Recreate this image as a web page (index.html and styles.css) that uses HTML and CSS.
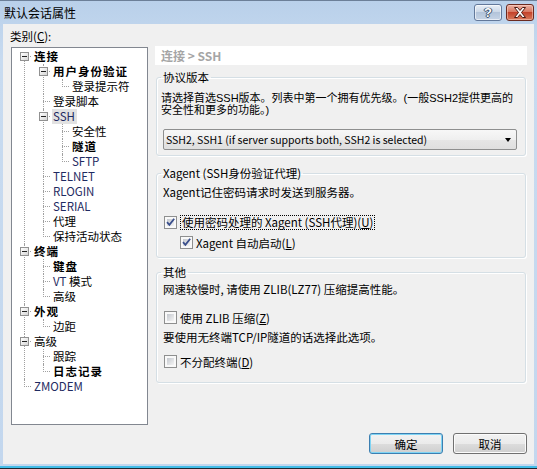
FILE: index.html
```html
<!DOCTYPE html>
<html lang="zh-CN">
<head>
    <meta charset="UTF-8">
    <title>默认会话属性</title>
    <link rel="stylesheet" href="styles.css">
</head>
<body>
    <div class="window">
        <div class="titlebar">
            <span class="title">默认会话属性</span>
            <div class="caption-buttons">
                <span class="cap-btn help">?</span>
                <span class="cap-btn close">
                    <svg width="14" height="11" viewBox="0 0 14 11">
                        <path d="M1.5 0.5h3l2.5 3 2.5-3h3l-4 5 4 5h-3l-2.5-3-2.5 3h-3l4-5z" fill="#fff" stroke="#4a1a12" stroke-width="1" stroke-linejoin="round"/>
                    </svg>
                </span>
            </div>
        </div>

        <div class="client">
            <div class="main">
                <div class="category">
                    <div class="category-label">类别(<u>C</u>):</div>
                    <div class="tree-box">
                        <ul class="tree">
                            <li><span class="exp"></span><span class="node b">连接</span>
                                <ul>
                                    <li><span class="exp"></span><span class="node b">用户身份验证</span>
                                        <ul>
                                            <li><span class="node">登录提示符</span></li>
                                        </ul>
                                    </li>
                                    <li><span class="node">登录脚本</span></li>
                                    <li><span class="exp"></span><span class="node en sel">SSH</span>
                                        <ul>
                                            <li><span class="node">安全性</span></li>
                                            <li><span class="node b">隧道</span></li>
                                            <li><span class="node en">SFTP</span></li>
                                        </ul>
                                    </li>
                                    <li><span class="node en">TELNET</span></li>
                                    <li><span class="node en">RLOGIN</span></li>
                                    <li><span class="node en">SERIAL</span></li>
                                    <li><span class="node">代理</span></li>
                                    <li><span class="node">保持活动状态</span></li>
                                </ul>
                            </li>
                            <li><span class="exp"></span><span class="node b">终端</span>
                                <ul>
                                    <li><span class="node b">键盘</span></li>
                                    <li><span class="node"><span class="en">VT</span> 模式</span></li>
                                    <li><span class="node">高级</span></li>
                                </ul>
                            </li>
                            <li><span class="exp"></span><span class="node b">外观</span>
                                <ul>
                                    <li><span class="node">边距</span></li>
                                </ul>
                            </li>
                            <li><span class="exp"></span><span class="node">高级</span>
                                <ul>
                                    <li><span class="node">跟踪</span></li>
                                    <li><span class="node b">日志记录</span></li>
                                </ul>
                            </li>
                            <li><span class="node en">ZMODEM</span></li>
                        </ul>
                    </div>
                </div>

                <div class="panel">
                    <div class="panel-title">连接 &gt; SSH</div>

                    <fieldset class="group group-proto">
                        <legend>协议版本</legend>
                        <p class="desc">请选择首选SSH版本。列表中第一个拥有优先级。(一般SSH2提供更高的<br>安全性和更多的功能。)</p>
                        <div class="select">
                            <span>SSH2, SSH1 (if server supports both, SSH2 is selected)</span>
                            <i class="arrow"></i>
                        </div>
                    </fieldset>

                    <fieldset class="group group-xagent">
                        <legend>Xagent (SSH身份验证代理)</legend>
                        <p class="line">Xagent记住密码请求时发送到服务器。</p>
                        <label class="check row-use">
                            <span class="box"><svg viewBox="0 0 13 13"><path d="M3 6.2l2.4 2.6 4.8-6" fill="none" stroke="#3a4f8c" stroke-width="1.8"/></svg></span>
                            <span class="focus">使用密码处理的 Xagent (SSH代理)(<u>U</u>)</span>
                        </label>
                        <label class="check row-auto">
                            <span class="box"><svg viewBox="0 0 13 13"><path d="M3 6.2l2.4 2.6 4.8-6" fill="none" stroke="#3a4f8c" stroke-width="1.8"/></svg></span>
                            <span>Xagent 自动启动(<u>L</u>)</span>
                        </label>
                    </fieldset>

                    <fieldset class="group group-other">
                        <legend>其他</legend>
                        <p class="line first">网速较慢时, 请使用 ZLIB(LZ77) 压缩提高性能。</p>
                        <label class="check row-zlib">
                            <span class="box"></span>
                            <span>使用 ZLIB 压缩(<u>Z</u>)</span>
                        </label>
                        <p class="line second">要使用无终端TCP/IP隧道的话选择此选项。</p>
                        <label class="check row-noterm">
                            <span class="box"></span>
                            <span>不分配终端(<u>D</u>)</span>
                        </label>
                    </fieldset>
                </div>
            </div>

            <div class="footer">
                <button class="btn default">确定</button>
                <button class="btn">取消</button>
            </div>
        </div>
    </div>
</body>
</html>
```

FILE: styles.css
```css
* {
    box-sizing: border-box;
}

body {
    margin: 0;
    font-family: "Noto Sans CJK SC", "Noto Sans", sans-serif;
    font-size: 11.5px;
    color: #000;
    background: #fff;
}

u {
    text-decoration: underline;
}

/* window frame */
.window {
    width: 537px;
    height: 469px;
    display: flex;
    flex-direction: column;
    background: linear-gradient(#b9d0ea, #c8dbf0 60px, #c3d7ee);
    border-top: 1px solid #6c7f98;
    box-shadow: inset 0 -1px 0 #1f2a33, inset 0 -3px 0 #43bde8;
}

.titlebar {
    height: 23px;
    display: flex;
    align-items: flex-start;
    justify-content: space-between;
    padding-left: 4px;
}

.title {
    line-height: 23px;
    font-size: 12px;
}

.caption-buttons {
    display: flex;
    gap: 4px;
    margin: 3px 3px 0 0;
}

.cap-btn {
    width: 28px;
    height: 17px;
    border-radius: 3px;
    display: flex;
    align-items: center;
    justify-content: center;
}

.help {
    border: 1px solid #62789a;
    background: linear-gradient(#e9eff7, #c9d6e6 50%, #b3c4da 50%, #c6d4e6);
    box-shadow: inset 0 0 0 1px rgba(255, 255, 255, 0.6);
    color: #fff;
    font-family: "Liberation Sans", sans-serif;
    font-weight: bold;
    font-size: 13px;
    text-shadow: 0 0 1px #2d3e58, 0 0 1px #2d3e58, 1px 0 0 #4d6180, -1px 0 0 #4d6180, 0 1px 0 #4d6180;
}

.close {
    border: 1px solid #6b2a20;
    background: linear-gradient(#eab0a2, #d6735c 50%, #c4432b 50%, #d77a5c);
    box-shadow: inset 0 0 0 1px rgba(255, 220, 210, 0.5);
}

/* client area */
.client {
    flex: 1;
    margin: 0 3px 5px;
    background: #f0f0f0;
    display: flex;
    flex-direction: column;
    padding: 5px 7px 10px 8px;
}

.main {
    display: flex;
}

.category {
    width: 137px;
}

.category-label {
    line-height: 15px;
    margin: 0 0 3px -1px;
}

.tree-box {
    height: 378px;
    border: 1px solid #828790;
    background: #fff;
}

/* tree */
.tree,
.tree ul {
    list-style: none;
    margin: 0;
    padding: 0;
}

.tree {
    padding: 1px 0 0 12px;
}

.tree ul {
    padding-left: 10px;
}

.tree li {
    position: relative;
    padding-left: 9px;
    line-height: 15px;
}

.tree li::before {
    content: "";
    position: absolute;
    left: 0;
    top: 7px;
    width: 7px;
    border-top: 1px dotted #a0a0a0;
}

.tree li::after {
    content: "";
    position: absolute;
    left: 0;
    top: 0;
    bottom: 0;
    border-left: 1px dotted #a0a0a0;
}

.tree li:last-child::after {
    bottom: auto;
    height: 8px;
}

.tree > li:first-child::after {
    top: 7px;
}

.exp {
    position: absolute;
    left: -4px;
    top: 3px;
    width: 9px;
    height: 9px;
    border: 1px solid #919191;
    background: linear-gradient(135deg, #fff, #d6d6d6);
    z-index: 1;
}

.exp::after {
    content: "";
    position: absolute;
    left: 1px;
    top: 3px;
    width: 5px;
    height: 1px;
    background: #222;
}

.node {
    display: inline-block;
    height: 15px;
    padding: 0 1px;
    white-space: nowrap;
}

.node.b {
    font-weight: bold;
    letter-spacing: 1px;
}

.en {
    color: #1f2b62;
}

.node.sel {
    background: #e2e2e2;
    padding: 0 2px 0 1px;
}

/* right panel */
.panel {
    width: 372px;
    margin-left: 7px;
    padding-top: 17px;
}

.panel-title {
    height: 19px;
    line-height: 19px;
    background: #fff;
    padding-left: 6px;
    color: #a5a5a5;
    font-weight: bold;
    font-size: 12px;
}

.group {
    margin: 0 1px;
    padding: 0 8px 0 6px;
    border: 1px solid #d5dfe5;
    border-radius: 3px;
    box-shadow: 1px 1px 0 #fff, inset 1px 1px 0 #fff;
    min-width: 0;
}

.group legend {
    padding: 0 2px;
    margin-left: -2px;
    line-height: 15px;
}

.group p {
    margin: 0;
    line-height: 15px;
}

.group-proto {
    margin-top: 5px;
    padding-bottom: 5px;
}

.group-proto .desc {
    margin: 7px 0 0 -2px;
    font-family: "Liberation Sans", "Noto Sans CJK SC", sans-serif;
    font-size: 11px;
    line-height: 12px;
    white-space: nowrap;
}

.select {
    margin-top: 13px;
    height: 21px;
    border: 1px solid #8e8f8f;
    border-radius: 2px;
    background: linear-gradient(#f7f7f7, #efefef 50%, #e6e6e6 50%, #dfdfdf);
    display: flex;
    align-items: center;
    padding-left: 2px;
    font-size: 10.5px;
    white-space: nowrap;
}

.arrow {
    margin-left: auto;
    margin-right: 5px;
    width: 0;
    height: 0;
    border-left: 3.5px solid transparent;
    border-right: 3.5px solid transparent;
    border-top: 4px solid #000;
}

.group-xagent {
    margin-top: 10px;
    padding-bottom: 7px;
}

.group-xagent .line {
    margin-top: 4px;
}

.group-other {
    margin-top: 7px;
    padding-bottom: 13px;
}

.group-other .first {
    margin-top: 2px;
}

.group-other .second {
    margin-top: 5px;
}

/* checkboxes */
.check {
    display: flex;
    align-items: center;
    height: 15px;
    gap: 2px;
    white-space: nowrap;
}

.box {
    position: relative;
    width: 13px;
    height: 13px;
    flex: none;
    border: 1px solid #8e8f8f;
    padding: 2px;
    background: linear-gradient(135deg, #c4c8ce, #f4f4f4) content-box, #f9f9f9;
    margin-right: 1px;
}

.box svg {
    position: absolute;
    left: -1px;
    top: -1px;
    width: 13px;
    height: 13px;
}

.row-use {
    margin: 14px 0 0 1px;
    height: 16px;
}

.focus {
    border: 1px dotted #000;
    padding: 0 1px;
    line-height: 13px;
}

.row-auto {
    margin: 5px 0 0 17px;
}

.row-zlib {
    margin: 13px 0 0 1px;
}

.row-noterm {
    margin: 9px 0 0 1px;
}

/* buttons */
.footer {
    margin-top: auto;
    display: flex;
    justify-content: flex-end;
    gap: 10px;
}

.btn {
    width: 74px;
    height: 21px;
    padding: 0;
    font: inherit;
    color: #000;
    border: 1px solid #707070;
    border-radius: 3px;
    background: linear-gradient(#f2f2f2, #ebebeb 50%, #dddddd 50%, #cfcfcf);
    box-shadow: inset 0 0 0 1px #fbfbfb;
}

.btn.default {
    border-color: #3c7fb1;
    box-shadow: inset 0 0 0 1px #7fd4f4;
}
```
